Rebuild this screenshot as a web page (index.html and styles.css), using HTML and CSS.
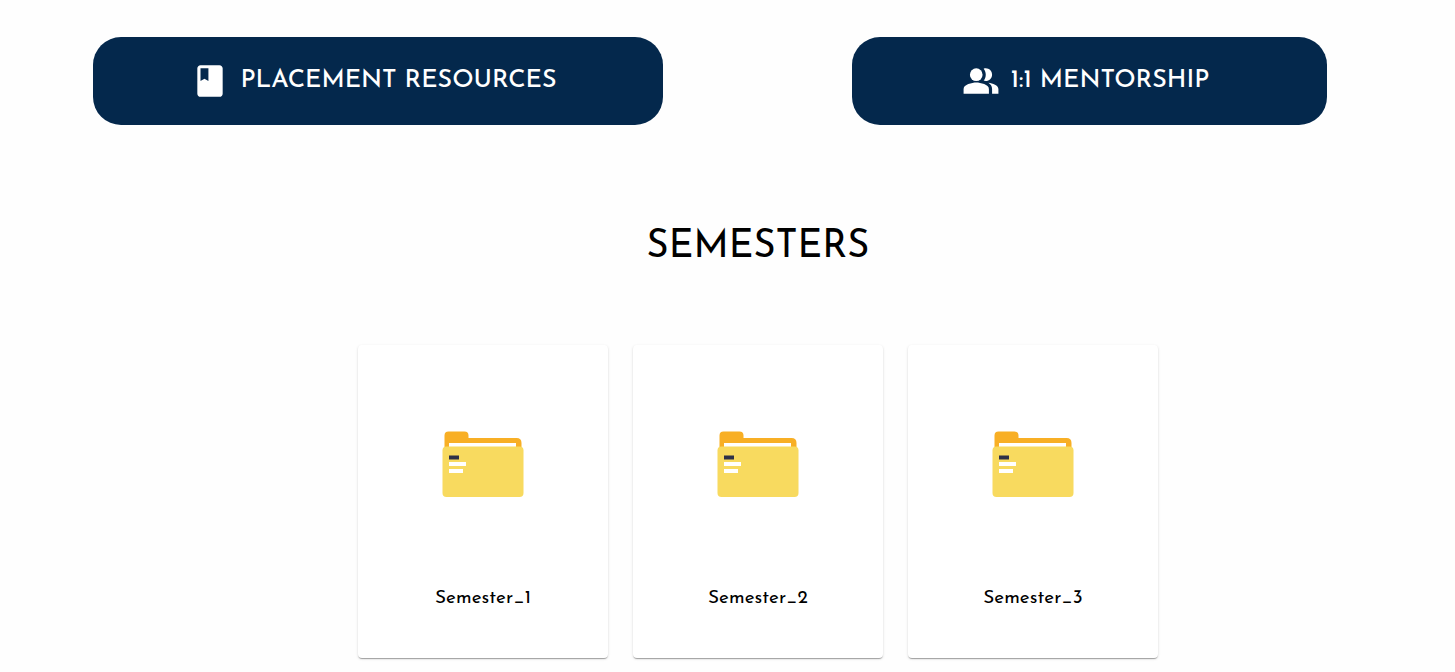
FILE: index.html
```html
<!DOCTYPE html>
<html lang="en">
<head>
<meta charset="utf-8">
<meta name="viewport" content="width=device-width, initial-scale=1">
<title>Semesters</title>
<link rel="stylesheet" href="styles.css">
</head>
<body>
<svg class="defs" width="0" height="0" aria-hidden="true">
  <symbol id="folder" viewBox="0 0 82 66">
    <path fill="#f8af25" d="M2.500 20V4.500q0-4 4-4h16q4 0 4 4V7h48q5 0 5 5v8z"/>
    <path fill="#fff" d="M7 12h67v6H7z"/>
    <rect x=".5" y="15.500" width="81" height="50.500" rx="4" fill="#f8da5f"/>
    <path fill="#2e3147" d="M7 24.500h10v4H7z"/>
    <path fill="#fff" d="M7 31h17v4H7zM7 38h14v4H7z"/>
  </symbol>
</svg>
<main>
  <nav class="actions">
    <button class="action" type="button">
      <svg class="icon" viewBox="0 0 24 24" aria-hidden="true"><path d="M18 2H6c-1.100 0-2 .9-2 2v16c0 1.100.9 2 2 2h12c1.100 0 2-.9 2-2V4c0-1.100-.9-2-2-2zM6 4h5v8l-2.500-1.500L6 12V4z"/></svg>
      <span>PLACEMENT RESOURCES</span>
    </button>
    <button class="action" type="button">
      <svg class="icon" viewBox="0 0 24 24" aria-hidden="true"><path d="M16.670 13.130C18.040 14.060 19 15.320 19 17v3h4v-3c0-2.180-3.570-3.470-6.330-3.870zM15 12c2.210 0 4-1.790 4-4s-1.790-4-4-4c-.47 0-.91.1-1.330.24C14.500 5.270 15 6.580 15 8s-.5 2.730-1.330 3.760c.42.14.86.24 1.330.24z"/><circle cx="9" cy="8" r="4"/><path d="M9 13c-2.670 0-8 1.340-8 4v3h16v-3c0-2.660-5.330-4-8-4z"/></svg>
      <span>1:1 MENTORSHIP</span>
    </button>
  </nav>
  <section class="semesters">
    <h1>SEMESTERS</h1>
    <div class="cards">
      <a class="card" href="#semester-1"><svg class="folder" aria-hidden="true"><use href="#folder"/></svg><span>Semester_1</span></a>
      <a class="card" href="#semester-2"><svg class="folder" aria-hidden="true"><use href="#folder"/></svg><span>Semester_2</span></a>
      <a class="card" href="#semester-3"><svg class="folder" aria-hidden="true"><use href="#folder"/></svg><span>Semester_3</span></a>
    </div>
  </section>
</main>
</body>
</html>
```
FILE: styles.css
```css
* { box-sizing: border-box; }
body {
  margin: 0;
  background: #fefefe;
  color: #000;
  font-family: "Josefin Sans", Lato, sans-serif;
  font-weight: 400;
}
.defs { display: block; }
.actions {
  display: grid;
  grid-template-columns: 6fr 5fr;
  gap: 13vw;
  padding: 37px 128px 0 93px;
}
.action {
  display: flex;
  align-items: center;
  justify-content: center;
  gap: 11px;
  padding: 25px 24px 25px 16px;
  border: 0;
  border-radius: 28px;
  background: #04284c;
  color: #fff;
  font: inherit;
  font-size: 25px;
  font-weight: 500;
  line-height: 38px;
  cursor: pointer;
}
.icon {
  width: 38px;
  height: 38px;
  flex: none;
  fill: currentColor;
}
.semesters {
  padding: 97px 0 14px 61px;
}
h1 {
  margin: 0;
  font-size: 38px;
  font-weight: 400;
  line-height: 52px;
  text-align: center;
}
.cards {
  display: flex;
  flex-wrap: wrap;
  justify-content: center;
  gap: 25px;
  margin-top: 71px;
}
.card {
  display: flex;
  flex-direction: column;
  align-items: center;
  gap: 90px;
  width: 250px;
  padding: 86px 16px 47px;
  border-radius: 4px;
  background: #fff;
  color: inherit;
  font-size: 19px;
  line-height: 24px;
  text-decoration: none;
  box-shadow: 0 2px 1px -1px rgba(0, 0, 0, .2), 0 1px 1px rgba(0, 0, 0, .14), 0 1px 3px rgba(0, 0, 0, .12);
}
.folder { width: 82px; height: 66px; }
```
